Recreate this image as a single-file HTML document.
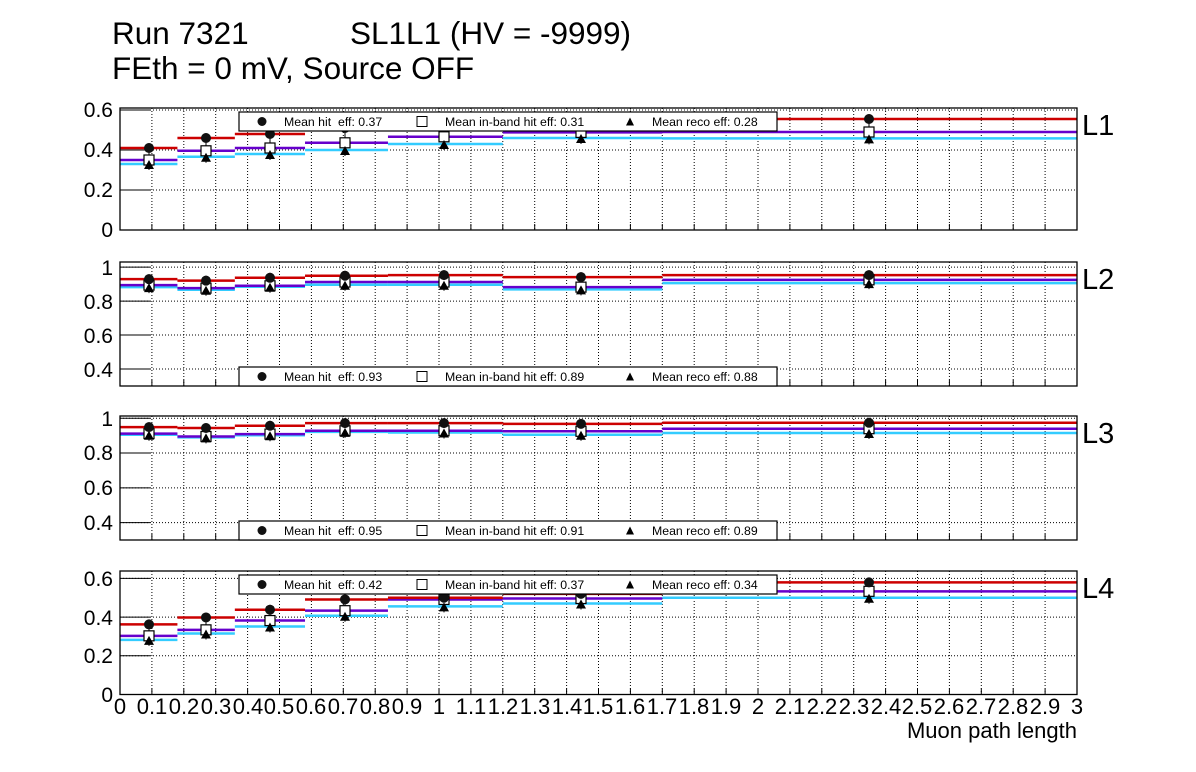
<!DOCTYPE html>
<html><head><meta charset="utf-8"><style>
html,body{margin:0;padding:0;background:#fff;}
svg{display:block;font-family:"Liberation Sans",Arial,sans-serif;}
text{white-space:pre;}
</style></head><body>
<svg id="s" width="1196" height="772" viewBox="0 0 1196 772" xmlns="http://www.w3.org/2000/svg">
<rect width="1196" height="772" fill="#fff"/>
<g id="g"></g>
<g font-size="31.5" fill="#000">
<text x="112" y="44">Run 7321</text>
<text x="350" y="44">SL1L1 (HV = -9999)</text>
<text x="112" y="79">FEth = 0 mV, Source OFF</text>
</g>
<g font-size="29" fill="#000">
<text x="1082" y="135">L1</text>
<text x="1082" y="289">L2</text>
<text x="1082" y="443">L3</text>
<text x="1082" y="598">L4</text>
</g>
<g font-size="21" text-anchor="end" fill="#000">
<text x="113" y="237">0</text><text x="113" y="197">0.2</text><text x="113" y="157">0.4</text><text x="113" y="117">0.6</text>
<text x="113" y="275">1</text><text x="113" y="309">0.8</text><text x="113" y="343">0.6</text><text x="113" y="377">0.4</text>
<text x="113" y="426">1</text><text x="113" y="460">0.8</text><text x="113" y="495">0.6</text><text x="113" y="530">0.4</text>
<text x="113" y="702">0</text><text x="113" y="663">0.2</text><text x="113" y="625">0.4</text><text x="113" y="586">0.6</text>
</g>
<g font-size="22" text-anchor="middle" fill="#000">
<text x="120" y="714">0</text><text x="152" y="714">0.1</text><text x="184" y="714">0.2</text><text x="216" y="714">0.3</text><text x="248" y="714">0.4</text><text x="279" y="714">0.5</text><text x="311" y="714">0.6</text><text x="343" y="714">0.7</text><text x="375" y="714">0.8</text><text x="407" y="714">0.9</text><text x="439" y="714">1</text><text x="471" y="714">1.1</text><text x="503" y="714">1.2</text><text x="535" y="714">1.3</text><text x="567" y="714">1.4</text><text x="598" y="714">1.5</text><text x="630" y="714">1.6</text><text x="662" y="714">1.7</text><text x="694" y="714">1.8</text><text x="726" y="714">1.9</text><text x="758" y="714">2</text><text x="790" y="714">2.1</text><text x="822" y="714">2.2</text><text x="854" y="714">2.3</text><text x="886" y="714">2.4</text><text x="917" y="714">2.5</text><text x="949" y="714">2.6</text><text x="981" y="714">2.7</text><text x="1013" y="714">2.8</text><text x="1045" y="714">2.9</text><text x="1077" y="714">3</text>
</g>
<text x="1077" y="738" font-size="22" text-anchor="end">Muon path length</text>
<g id="leg"></g>
<g font-size="12.3" fill="#000">
<text x="284" y="126">Mean hit  eff: 0.37</text><text x="445" y="126">Mean in-band hit eff: 0.31</text><text x="652" y="126">Mean reco eff: 0.28</text>
<text x="284" y="381">Mean hit  eff: 0.93</text><text x="445" y="381">Mean in-band hit eff: 0.89</text><text x="652" y="381">Mean reco eff: 0.88</text>
<text x="284" y="535">Mean hit  eff: 0.95</text><text x="445" y="535">Mean in-band hit eff: 0.91</text><text x="652" y="535">Mean reco eff: 0.89</text>
<text x="284" y="589">Mean hit  eff: 0.42</text><text x="445" y="589">Mean in-band hit eff: 0.37</text><text x="652" y="589">Mean reco eff: 0.34</text>
</g>
</svg>
<script>
(function(){
var NS="http://www.w3.org/2000/svg",g=document.getElementById("g"),lg=document.getElementById("leg");
function el(p,t,a){var e=document.createElementNS(NS,t);for(var k in a)e.setAttribute(k,a[k]);p.appendChild(e);return e;}
function X(v){return 120+v*319;}
var edges=[0,0.18,0.36,0.58,0.84,1.2,1.7,3];
var mx=[149,206,270,345,444,581,869];
var pads=[
{t:108,b:230,v0:0,v1:0.61,ticks:[0,0.2,0.4,0.6],leg:[112,131],
 r:[0.41,0.46,0.48,0.51,0.53,0.54,0.555],p:[0.35,0.396,0.41,0.436,0.466,0.488,0.49],c:[0.33,0.366,0.38,0.40,0.43,0.46,0.458]},
{t:262,b:386,v0:0.3,v1:1.03,ticks:[0.4,0.6,0.8,1],leg:[367,386],
 r:[0.929,0.92,0.937,0.949,0.953,0.941,0.953],p:[0.894,0.876,0.89,0.912,0.912,0.882,0.925],c:[0.882,0.867,0.884,0.896,0.896,0.869,0.906]},
{t:416,b:540,v0:0.3,v1:1.013,ticks:[0.4,0.6,0.8,1],leg:[521,540],
 r:[0.949,0.944,0.957,0.972,0.972,0.968,0.974],p:[0.912,0.895,0.909,0.928,0.928,0.925,0.94],c:[0.905,0.89,0.902,0.922,0.918,0.905,0.915]},
{t:571,b:694.5,v0:0,v1:0.638,ticks:[0,0.2,0.4,0.6],leg:[575,594],
 r:[0.362,0.398,0.438,0.491,0.50,0.52,0.579],p:[0.303,0.334,0.382,0.433,0.491,0.496,0.533],c:[0.282,0.315,0.351,0.407,0.455,0.47,0.50]}
];
pads.forEach(function(P){
 function Y(v){return P.b-(v-P.v0)/(P.v1-P.v0)*(P.b-P.t);}
 for(var i=1;i<30;i++){var x=X(i/10);el(g,"line",{x1:x,x2:x,y1:P.t,y2:P.b,stroke:"#000","stroke-width":1,"stroke-dasharray":"1,2"});
   el(g,"line",{x1:x,x2:x,y1:P.b-6,y2:P.b,stroke:"#000","stroke-width":1});}
 P.ticks.forEach(function(v){var y=Y(v);el(g,"line",{x1:120,x2:1077,y1:y,y2:y,stroke:"#000","stroke-width":1,"stroke-dasharray":"1,2"});
   el(g,"line",{x1:120,x2:150,y1:y,y2:y,stroke:"#000","stroke-width":1});});
 [["c","#33ccff"],["p","#6600cc"],["r","#cc0000"]].forEach(function(s){
   P[s[0]].forEach(function(v,i){el(g,"line",{x1:X(edges[i]),x2:X(edges[i+1]),y1:Y(v),y2:Y(v),stroke:s[1],"stroke-width":2.5});});});
 mx.forEach(function(x,i){
   el(g,"line",{x1:x,x2:x,y1:Y(P.r[i])-5,y2:Y(P.c[i])+6,stroke:"#000","stroke-width":1});
   var yp=Y(P.p[i]);el(g,"rect",{x:x-5,y:yp-5,width:10,height:10,fill:"#fff",stroke:"#000","stroke-width":1.2});
   var yt=Y(P.c[i])+1;el(g,"polygon",{points:(x-5)+","+(yt+4)+" "+(x+5)+","+(yt+4)+" "+x+","+(yt-5),fill:"#000"});
   el(g,"circle",{cx:x,cy:Y(P.r[i]),r:5,fill:"#111"});
 });
 el(g,"rect",{x:120,y:P.t,width:957,height:P.b-P.t,fill:"none",stroke:"#000","stroke-width":1.3});
 var y0=P.leg[0],y1=P.leg[1],ym=(y0+y1)/2;
 el(lg,"rect",{x:239,y:y0,width:538,height:y1-y0,fill:"#fff",stroke:"#000","stroke-width":1.2});
 el(lg,"circle",{cx:262,cy:ym,r:4.5,fill:"#111"});
 el(lg,"rect",{x:417,y:ym-5,width:10,height:10,fill:"#fff",stroke:"#000","stroke-width":1});
 el(lg,"polygon",{points:"626,"+(ym+4)+" 634,"+(ym+4)+" 630,"+(ym-4),fill:"#000"});
});
})();
</script>
</body></html>
